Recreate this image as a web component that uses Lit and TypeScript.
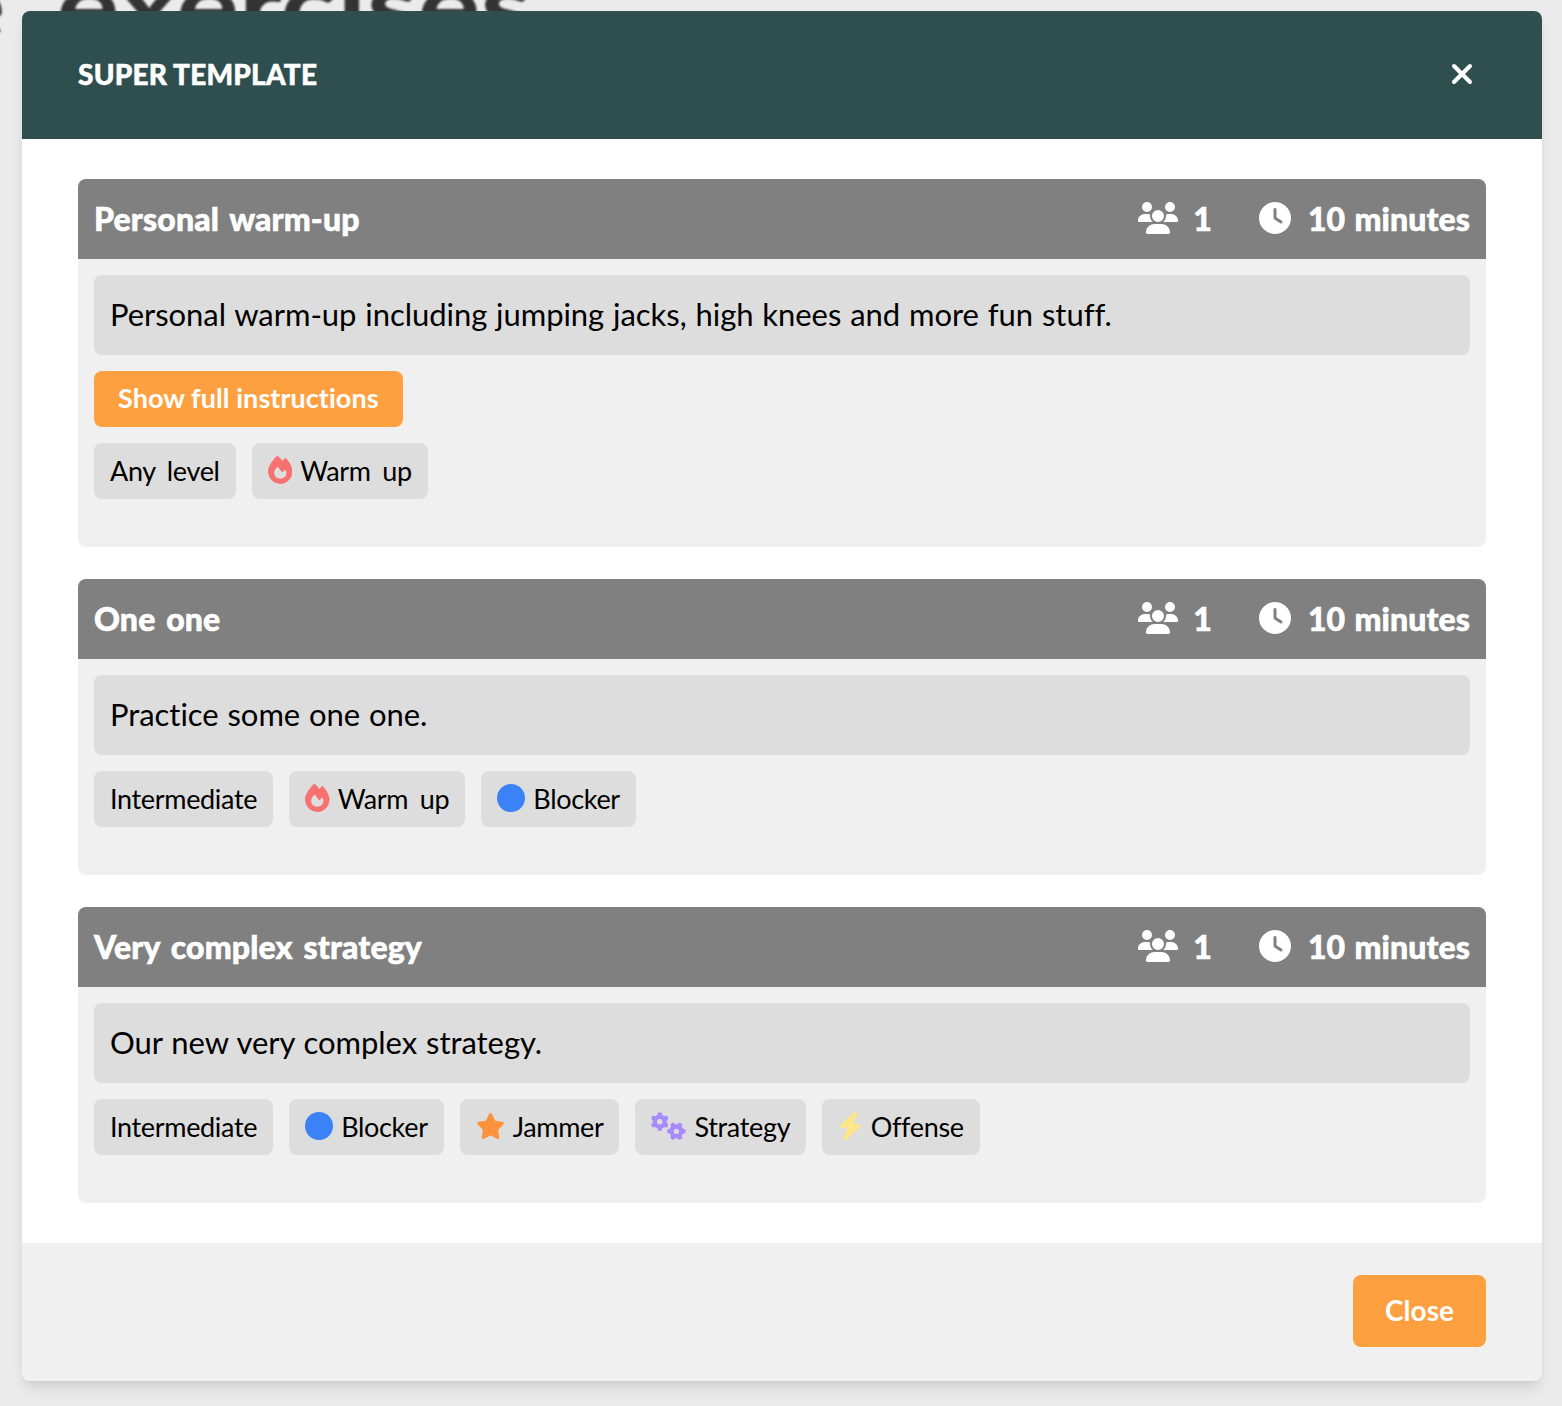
import { LitElement, html, css, svg } from "lit";
import { customElement } from "lit/decorators.js";

const USERS = "M144 0a80 80 0 1 1 0 160A80 80 0 1 1 144 0zM512 0a80 80 0 1 1 0 160A80 80 0 1 1 512 0zM0 298.7C0 239.8 47.8 192 106.7 192h42.7c15.9 0 31 3.5 44.6 9.7c-1.3 7.2-1.9 14.7-1.9 22.3c0 38.2 16.8 72.5 43.3 96c-.2 0-.4 0-.7 0H21.3C9.6 320 0 310.4 0 298.7zM405.3 320c-.2 0-.4 0-.7 0c26.6-23.5 43.3-57.8 43.3-96c0-7.6-.7-15-1.9-22.3c13.6-6.3 28.7-9.7 44.6-9.7h42.7C592.2 192 640 239.8 640 298.7c0 11.8-9.6 21.3-21.3 21.3H405.3zM224 224a96 96 0 1 1 192 0 96 96 0 1 1 -192 0zM128 485.3C128 411.7 187.7 352 261.3 352H378.7C452.3 352 512 411.7 512 485.3c0 14.7-11.9 26.7-26.7 26.7H154.7c-14.7 0-26.7-11.9-26.7-26.7z";
const CLOCK = "M256 0a256 256 0 1 1 0 512A256 256 0 1 1 256 0zM232 120V256c0 8 4 15.5 10.7 20l96 64c11 7.4 25.9 4.4 33.3-6.7s4.4-25.9-6.7-33.3L280 243.2V120c0-13.3-10.7-24-24-24s-24 10.7-24 24z";
const STAR = "M316.9 18C311.6 7 300.4 0 288.1 0s-23.4 7-28.8 18L195 150.3 51.4 171.5c-12 1.8-22 10.2-25.7 21.7s-.7 24.2 7.9 32.7L137.8 329 113.2 474.7c-2 12 3 24.2 12.9 31.3s23 8 33.8 2.3l128.3-68.5 128.3 68.5c10.8 5.7 23.9 4.9 33.8-2.3s14.9-19.3 12.9-31.3L438.5 329 542.7 225.9c8.6-8.5 11.7-21.2 7.9-32.7s-13.7-19.9-25.7-21.7L381.2 150.3 316.9 18z";
const BOLT = "M349.4 44.6c5.9-13.7 1.5-29.7-10.6-38.5s-28.6-8-39.9 1.8l-256 224c-10 8.8-13.6 22.9-8.9 35.3S50.7 288 64 288H175.5L98.6 467.4c-5.9 13.7-1.5 29.7 10.6 38.5s28.6 8 39.9-1.8l256-224c10-8.8 13.6-22.9 8.9-35.3s-16.6-20.7-30-20.7H272.5L349.4 44.6z";
const FIRE = "M159.3 5.4c7.8-7.3 19.9-7.2 27.7 .1c27.6 25.9 53.5 53.8 77.7 84c11-14.4 23.5-30.1 37-42.9c7.9-7.4 20.1-7.4 28 .1c34.6 33 63.9 76.6 84.5 118c20.3 40.8 33.8 82.5 33.8 111.9C448 404.2 348.2 512 224 512C98.4 512 0 404.1 0 276.5c0-38.4 17.8-85.3 45.4-131.7C73.3 97.7 112.7 48.6 159.3 5.4zM225.7 416c25.3 0 47.7-7 68.8-21c42.1-29.4 53.4-88.2 28.1-134.4c-4.5-9-16-9.6-22.5-2l-25.2 29.3c-6.6 7.6-18.5 7.4-24.7-.5c-16.5-21-46-58.5-62.8-79.8c-6.3-8-18.3-8.1-24.7-.1c-33.8 42.5-50.8 69.3-50.8 99.4C112 375.4 162.9 416 225.7 416z";
const GEARS = "M308.5 135.3c7.1-6.3 9.9-16.2 6.2-25c-2.3-5.3-4.8-10.5-7.6-15.5L304 89.4c-3-5-6.3-9.9-9.8-14.6c-5.7-7.6-15.7-10.1-24.7-7.1l-28.2 9.3c-10.7-8.8-23-16-36.2-20.9L199 27.1c-1.9-9.3-9.1-16.7-18.5-17.8C173.9 8.4 167.2 8 160.4 8h-.7c-6.8 0-13.5 .4-20.1 1.2c-9.4 1.1-16.6 8.6-18.5 17.8L115 56.1c-13.3 5-25.5 12.1-36.2 20.9L50.5 67.8c-9-3-19-.5-24.7 7.1c-3.5 4.7-6.8 9.6-9.9 14.6l-3 5.3c-2.8 5-5.3 10.2-7.6 15.6c-3.7 8.7-.9 18.6 6.2 25l22.2 19.8C32.6 161.9 32 168.9 32 176s.6 14.1 1.7 20.9L11.5 216.7c-7.1 6.3-9.9 16.2-6.2 25c2.3 5.3 4.8 10.5 7.6 15.6l3 5.2c3 5.1 6.3 9.9 9.9 14.6c5.7 7.6 15.7 10.1 24.7 7.1l28.2-9.3c10.7 8.8 23 16 36.2 20.8l6.1 29.1c1.9 9.3 9.1 16.7 18.5 17.8c6.7 .8 13.5 1.2 20.4 1.2s13.7-.4 20.4-1.2c9.4-1.1 16.6-8.6 18.5-17.8l6.1-29.1c13.3-5 25.5-12.1 36.2-20.8l28.2 9.3c9 3 19 .5 24.7-7.1c3.5-4.7 6.8-9.5 9.8-14.6l3.1-5.4c2.8-5 5.3-10.2 7.6-15.5c3.7-8.7 .9-18.6-6.2-25l-22.2-19.8c1.1-6.8 1.7-13.8 1.7-20.9s-.6-14.1-1.7-20.9l22.2-19.8zM112 176a48 48 0 1 1 96 0 48 48 0 1 1 -96 0zM504.7 500.5c6.3 7.1 16.2 9.9 25 6.2c5.3-2.3 10.5-4.8 15.5-7.6l5.4-3.1c5-3 9.9-6.3 14.6-9.8c7.6-5.7 10.1-15.7 7.1-24.7l-9.3-28.2c8.8-10.7 16-23 20.9-36.2l29.1-6.1c9.3-1.9 16.7-9.1 17.8-18.5c.8-6.7 1.2-13.5 1.2-20.4s-.4-13.7-1.2-20.4c-1.1-9.4-8.6-16.6-17.8-18.5L583.9 307c-5-13.3-12.1-25.5-20.9-36.2l9.3-28.2c3-9 .5-19-7.1-24.7c-4.7-3.5-9.6-6.8-14.6-9.9l-5.3-3c-5-2.8-10.2-5.3-15.6-7.6c-8.7-3.7-18.6-.9-25 6.2l-19.8 22.2c-6.8-1.1-13.8-1.7-20.9-1.7s-14.1 .6-20.9 1.7l-19.8-22.2c-6.3-7.1-16.2-9.9-25-6.2c-5.3 2.3-10.5 4.8-15.6 7.6l-5.2 3c-5.1 3-9.9 6.3-14.6 9.9c-7.6 5.7-10.1 15.7-7.1 24.7l9.3 28.2c-8.8 10.7-16 23-20.8 36.2L315.1 313c-9.3 1.9-16.7 9.1-17.8 18.5c-.8 6.7-1.2 13.5-1.2 20.4s.4 13.7 1.2 20.4c1.1 9.4 8.6 16.6 17.8 18.5l29.1 6.1c5 13.3 12.1 25.5 20.8 36.2l-9.3 28.2c-3 9-.5 19 7.1 24.7c4.7 3.5 9.5 6.8 14.6 9.8l5.4 3.1c5 2.8 10.2 5.3 15.5 7.6c8.7 3.7 18.6 .9 25-6.2l19.8-22.2c6.8 1.1 13.8 1.7 21 1.7s14.1-.6 21-1.7l19.8 22.2zM464 304a48 48 0 1 1 0 96 48 48 0 1 1 0-96z";

type Kind = "fire" | "circle" | "star" | "cogs" | "bolt";
interface Tag { label: string; icon?: Kind; }
interface Item { title: string; desc: string; more?: boolean; tags: Tag[]; }

const ITEMS: Item[] = [
  {
    title: "Personal warm-up",
    desc: "Personal warm-up including jumping jacks, high knees and more fun stuff.",
    more: true,
    tags: [{ label: "Any level" }, { label: "Warm up", icon: "fire" }],
  },
  {
    title: "One one",
    desc: "Practice some one one.",
    tags: [{ label: "Intermediate" }, { label: "Warm up", icon: "fire" }, { label: "Blocker", icon: "circle" }],
  },
  {
    title: "Very complex strategy",
    desc: "Our new very complex strategy.",
    tags: [
      { label: "Intermediate" },
      { label: "Blocker", icon: "circle" },
      { label: "Jammer", icon: "star" },
      { label: "Strategy", icon: "cogs" },
      { label: "Offense", icon: "bolt" },
    ],
  },
];

function tagIcon(kind: Kind) {
  switch (kind) {
    case "fire":
      return html`<svg class="ic fire" viewBox="0 0 448 512">${svg`<path d=${FIRE}></path>`}</svg>`;
    case "circle":
      return html`<svg class="ic circle" viewBox="0 0 512 512">${svg`<circle cx="256" cy="256" r="256"></circle>`}</svg>`;
    case "star":
      return html`<svg class="ic star" viewBox="0 0 576 512">${svg`<path d=${STAR}></path>`}</svg>`;
    case "cogs":
      return html`<svg class="ic cogs" viewBox="0 0 640 512">${svg`<path d=${GEARS}></path>`}</svg>`;
    case "bolt":
      return html`<svg class="ic bolt" viewBox="0 0 448 512">${svg`<path d=${BOLT}></path>`}</svg>`;
  }
}

@customElement("app-root")
export class AppRoot extends LitElement {
  static styles = css`
    :host {
      display: block;
      position: relative;
      height: 1406px;
      box-sizing: border-box;
      overflow: hidden;
      padding: 11px 20px 25px 22px;
      background: #ebebeb;
      font-family: "Lato", "Liberation Sans", sans-serif;
      color: #000;
    }
    .behind {
      position: absolute;
      left: -57px;
      top: -52px;
      font-size: 92px;
      line-height: 110px;
      word-spacing: 18px;
      white-space: nowrap;
      font-weight: 700;
      color: #333;
      filter: blur(1px);
      transform: scaleX(1.27);
      transform-origin: left top;
    }
    .modal {
      position: relative;
      height: 1370px;
      display: flex;
      flex-direction: column;
      background: #fff;
      border-radius: 8px;
      overflow: hidden;
      box-shadow: 0 10px 15px -3px rgba(0, 0, 0, 0.1), 0 4px 6px -2px rgba(0, 0, 0, 0.05);
    }
    .head {
      height: 128px;
      flex: none;
      box-sizing: border-box;
      background: #2f4f4f;
      color: #fff;
      display: flex;
      align-items: center;
      justify-content: space-between;
      padding: 0 68px 2px 56px;
    }
    .head h1 {
      margin: 0;
      font-size: 28px;
      font-weight: 900;
      letter-spacing: 0.2px;
      -webkit-text-stroke: 0.5px #fff;
    }
    .x { width: 24px; height: 24px; display: block; }
    .x line { stroke: #fff; stroke-width: 4; stroke-linecap: round; }
    .main {
      flex: 1;
      padding: 40px 56px;
      display: flex;
      flex-direction: column;
      gap: 32px;
    }
    .card { background: #f0f0f0; border-radius: 8px; overflow: hidden; }
    .card-head {
      height: 80px;
      box-sizing: border-box;
      padding: 0 16px 2px;
      background: #808080;
      color: #fff;
      display: flex;
      align-items: center;
      justify-content: space-between;
      font-size: 32px;
      font-weight: 900;
      -webkit-text-stroke: 0.6px #fff;
    }
    .card-head h2 {
      margin: 0;
      font: inherit;
      letter-spacing: 0.15px;
      word-spacing: 3px;
    }
    .meta { display: flex; align-items: center; letter-spacing: 0.1px; word-spacing: 1.5px; }
    .meta svg { fill: #fff; height: 32px; display: block; }
    .users { width: 40px; }
    .clock { width: 32px; }
    .n { margin: 0 47px 0 15px; }
    .mins { margin-left: 17px; }
    .card-body {
      padding: 16px 16px 32px;
      display: flex;
      flex-direction: column;
      align-items: flex-start;
      gap: 16px;
    }
    .desc {
      align-self: stretch;
      height: 80px;
      box-sizing: border-box;
      padding: 0 16px 2px;
      display: flex;
      align-items: center;
      background: #ddd;
      border-radius: 8px;
      font-size: 31px;
      letter-spacing: -0.05px;
      word-spacing: 1px;
    }
    .btn {
      border: 0;
      background: #ffa040;
      color: #fff;
      border-radius: 8px;
      font-family: inherit;
      font-weight: 700;
      display: flex;
      align-items: center;
      justify-content: center;
    }
    .show { height: 56px; padding: 0 24px 4px; font-size: 27px; letter-spacing: 0.05px; }
    .tags { display: flex; gap: 16px; margin-bottom: 16px; }
    .tag {
      height: 56px;
      box-sizing: border-box;
      padding: 0 16px 2px;
      display: flex;
      align-items: center;
      gap: 8px;
      background: #ddd;
      border-radius: 8px;
      font-size: 27px;
      letter-spacing: -0.33px;
      word-spacing: 5px;
    }
    .ic { height: 28px; display: block; flex: none; }
    .fire { width: 24.5px; fill: #f87171; }
    .circle { width: 28px; fill: #3b82f6; }
    .star { width: 29px; fill: #fb923c; }
    .cogs { width: 35px; fill: #a78bfa; }
    .bolt { width: 24.5px; fill: #fde68a; }
    .foot {
      height: 138px;
      flex: none;
      box-sizing: border-box;
      background: #f0f0f0;
      padding: 32px 56px 0;
      display: flex;
      justify-content: flex-end;
      align-items: flex-start;
    }
    .close { width: 133px; height: 72px; padding: 0 0 2px; font-size: 28px; }
  `;

  render() {
    return html`
      <div class="behind">e exercises</div>
      <section class="modal">
        <header class="head">
          <h1>SUPER TEMPLATE</h1>
          <svg class="x" viewBox="0 0 24 24">
            ${svg`<line x1="4" y1="4" x2="20" y2="20"></line><line x1="20" y1="4" x2="4" y2="20"></line>`}
          </svg>
        </header>
        <div class="main">
          ${ITEMS.map(
            (it) => html`
              <article class="card">
                <div class="card-head">
                  <h2>${it.title}</h2>
                  <div class="meta">
                    <svg class="users" viewBox="0 0 640 512">${svg`<path d=${USERS}></path>`}</svg>
                    <span class="n">1</span>
                    <svg class="clock" viewBox="0 0 512 512">${svg`<path d=${CLOCK}></path>`}</svg>
                    <span class="mins">10 minutes</span>
                  </div>
                </div>
                <div class="card-body">
                  <div class="desc">${it.desc}</div>
                  ${it.more ? html`<button class="btn show">Show full instructions</button>` : ""}
                  <div class="tags">
                    ${it.tags.map(
                      (t) => html`<span class="tag">${t.icon ? tagIcon(t.icon) : ""}${t.label}</span>`
                    )}
                  </div>
                </div>
              </article>
            `
          )}
        </div>
        <footer class="foot">
          <button class="btn close">Close</button>
        </footer>
      </section>
    `;
  }
}
